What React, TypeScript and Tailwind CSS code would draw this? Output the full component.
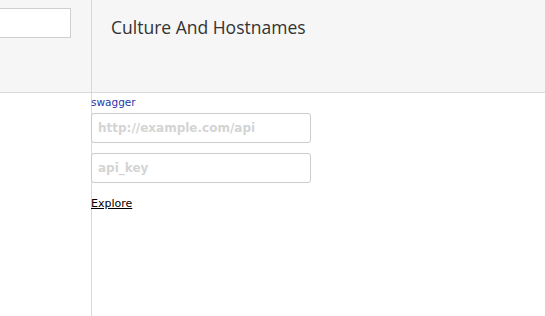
import React from "react";

export default function App() {
  return (
    <div className="w-[545px] h-[316px] bg-white flex overflow-hidden">
      <div className="w-[92px] shrink-0 h-full border-r border-[#d9d9d9] flex flex-col">
        <div className="h-[93px] bg-[#f6f6f6] border-b border-[#d9d9d9] pt-[8px] pr-[20px]">
          <div className="h-[30px] bg-white border border-[#cfcfcf] -ml-2"></div>
        </div>
      </div>
      <div className="flex-1 flex flex-col">
        <div className="h-[93px] bg-[#f6f6f6] border-b border-[#d9d9d9] pl-[19px] pt-[14px]">
          <h1 className="text-[17.5px] text-[#333] font-['Open_Sans',sans-serif]">Culture And Hostnames</h1>
        </div>
        <div className="-ml-[2px] pt-[2px] font-['DejaVu_Sans',sans-serif]">
          <div className="text-[10.5px] text-[#2838a8] leading-[14px] pl-px">swagger</div>
          <div className="w-[220px] h-[30px] mt-[4px] ml-px border border-[#ccc] rounded-[3px] flex items-center px-[6px] text-[12px] font-bold text-[#d4d4d4]">http://example.com/api</div>
          <div className="w-[220px] h-[30px] mt-[10px] ml-px border border-[#ccc] rounded-[3px] flex items-center px-[6px] text-[12px] font-bold text-[#d4d4d4]">api_key</div>
          <div className="mt-[14px] ml-px text-[11px] text-black underline leading-[14px]">Explore</div>
        </div>
      </div>
    </div>
  );
}
